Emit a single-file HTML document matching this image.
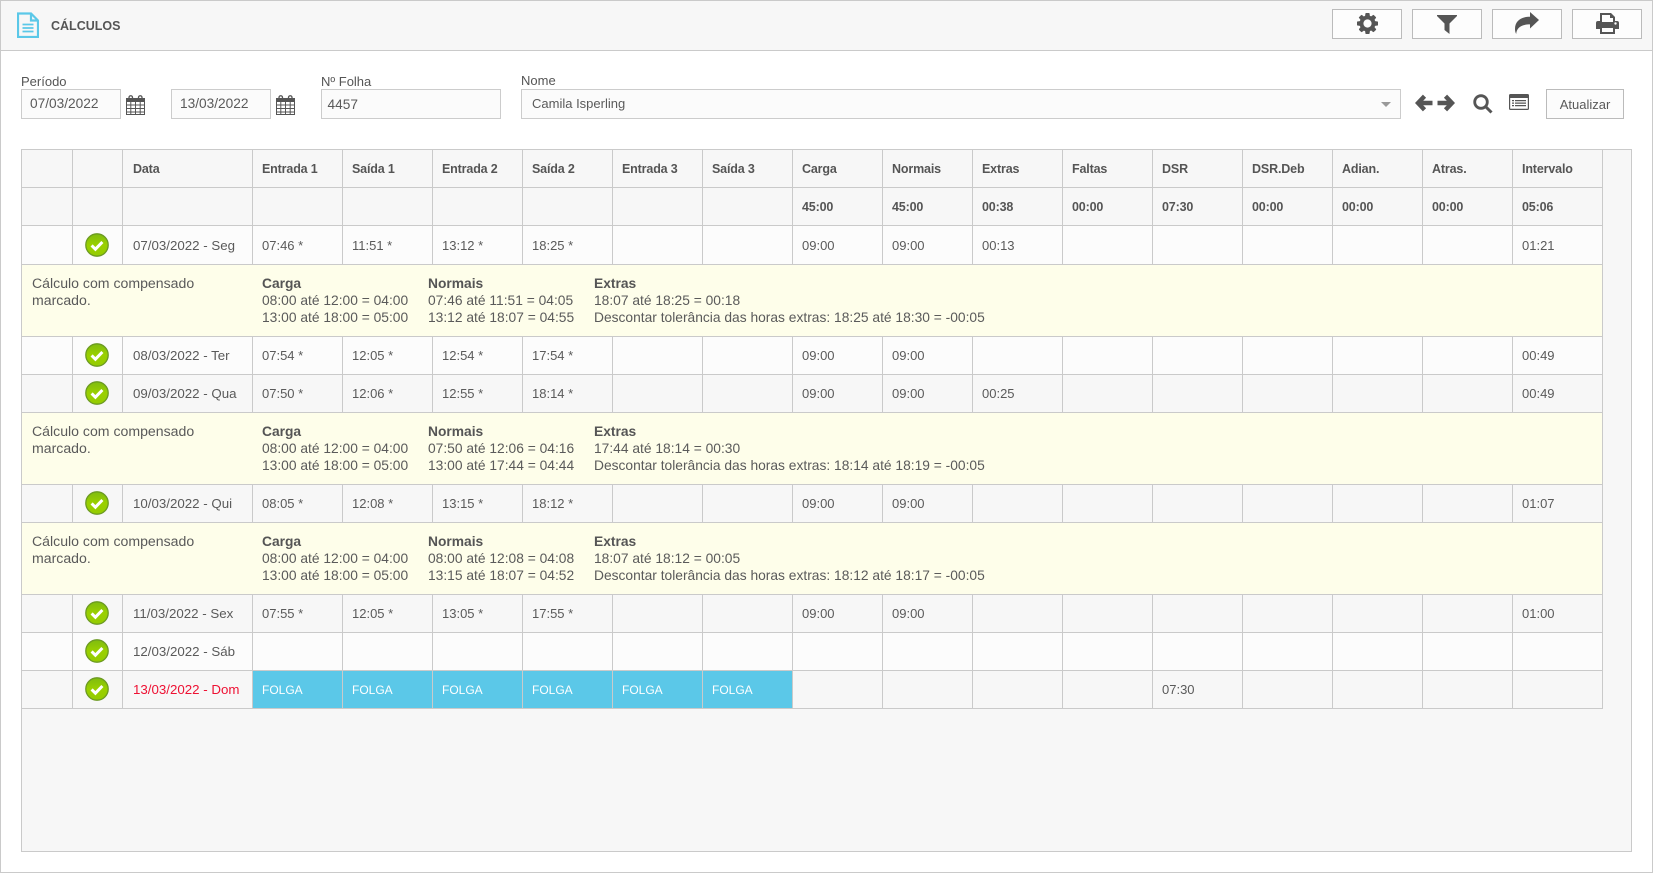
<!DOCTYPE html>
<html lang="pt-BR"><head><meta charset="utf-8"><title>Cálculos</title>
<style>
html,body{margin:0;padding:0;background:#fff}
body{width:1653px;height:873px;position:relative;overflow:hidden;font:13px "Liberation Sans",sans-serif;color:#555}
.abs,.frame,.head,.btn,.inp,.lbl,.box,svg.i{position:absolute;box-sizing:border-box}
.frame{left:0;top:0;width:1653px;height:873px;border:1px solid #cacaca}
.head{left:1px;top:1px;width:1651px;height:50px;background:#f7f7f7;border-bottom:1px solid #cacaca}
.title{position:absolute;left:50px;top:17px;font:bold 12.5px/16px "Liberation Sans",sans-serif;color:#555}
.btn{top:9px;width:70px;height:30px;background:#fdfdfd;border:1px solid #bbb}
.inp{top:89px;height:30px;background:#fbfbfb;border:1px solid #ccc;line-height:28px;color:#5a5a5a}
.lbl{top:74px;line-height:16px;font-size:13px;color:#555}
.box{left:21px;top:149px;width:1611px;height:703px;background:#f7f7f7;border:1px solid #cacaca}
table{border-collapse:separate;border-spacing:0;table-layout:fixed;width:1581px;font-size:13px;color:#5a5a5a}
td{border-right:1px solid #cacaca;border-bottom:1px solid #cacaca;padding:0 0 0 9px;white-space:nowrap;vertical-align:middle;overflow:hidden}
td.n{padding:0}
td:nth-child(3){padding-left:10px}
tr.h td{height:37px;font-weight:bold;font-size:12.5px;letter-spacing:-.15px;background:#f7f7f7;color:#555}
tr.a td{height:37px;background:#fcfcfc}
tr.b td{height:37px;background:#f7f7f7}
tr.f td{height:38px;background:#fcfcfc}
tr.y td{height:71px;background:#fefeea;padding:0;position:relative}
tr:not(.h) td:nth-child(3){font-size:13.3px}
.c{position:relative;height:37px}
.c svg{position:absolute;left:12px;top:6px}
.y div{position:absolute;top:10px;font-size:13.8px;line-height:17px;white-space:nowrap}
.y div:first-child{font-size:14.1px}
.y b{font-weight:bold;color:#555}
td.fo{background:#5bc8e8!important;color:#fff;font-size:12px}
tr:not(.h) td.red{color:#ee1133}
</style></head><body>
<svg width="0" height="0" style="position:absolute"><defs>
<linearGradient id="g" x1="0" y1="0" x2="0" y2="1"><stop offset="0" stop-color="#7fbc10"/><stop offset=".5" stop-color="#9ad000"/><stop offset="1" stop-color="#94cc00"/></linearGradient>
<symbol id="ok" viewBox="0 0 24 24"><circle cx="12" cy="12" r="11.2" fill="url(#g)" stroke="#6c9a22" stroke-width="1.3"/><path d="M6.6 12.4l3.8 3.8 7-7.2" fill="none" stroke="#fff" stroke-width="3"/></symbol>
<symbol id="cal" viewBox="0 0 19 20"><path d="M3 5V2.5A1.5 1.5 0 0 1 6.5 2.5V5M12.5 5V2.5A1.5 1.5 0 0 1 16 2.5V5" fill="none" stroke="#555" stroke-width="1.3"/><path d="M0 3H19V20H0Z" fill="#555"/><path d="M1 7h3.300v2.500H1zM5.300 7h3.700v2.500H5.300zM10 7h3.700v2.500H10zM14.700 7H18v2.500h-3.300zM1 10.500h3.300V13H1zM5.300 10.500h3.700V13H5.300zM10 10.500h3.700V13H10zM14.700 10.500H18V13h-3.300zM1 14h3.300v2.500H1zM5.300 14h3.700v2.500H5.300zM10 14h3.700v2.500H10zM14.700 14H18v2.500h-3.300z" fill="#fff"/><path d="M1 17.500h3.300V19H1zM5.300 17.500h3.700V19H5.300zM10 17.500h3.700V19H10zM14.700 17.500H18V19h-3.300z" fill="#fff"/></symbol>
</defs></svg>
<div class="frame"></div>
<div class="head"><span class="title">CÁLCULOS</span></div>
<svg class="i" style="left:17px;top:12px" width="22" height="26" viewBox="0 0 22 26" fill="none" stroke="#5bc8e8" stroke-width="2.2"><path d="M1 1.500H14L21 8.500V25H1Z"/><path d="M14 1.500V8.500H21"/><path d="M5.500 12.500H16.500M5.500 16H16.500M5.500 19.500H16.500" stroke-width="1.700"/></svg>

<div class="btn" style="left:1332px"></div><div class="btn" style="left:1412px"></div><div class="btn" style="left:1492px"></div><div class="btn" style="left:1572px"></div>
<svg class="i" style="left:1357px;top:13px" width="21" height="21" viewBox="0 0 1536 1536"><path fill="#555" fill-rule="evenodd" d="M1024 768q0-106-75-181t-181-75-181 75-75 181 75 181 181 75 181-75 75-181zm512-109v222q0 12-8 23t-20 13l-185 28q-19 54-39 91 35 50 107 138 10 12 10 25t-9 23q-27 37-99 108t-94 71q-12 0-26-9l-138-108q-44 23-91 38-16 136-29 186-7 28-36 28h-222q-14 0-24.500-8.500t-11.500-21.500l-28-184q-49-16-90-37l-141 107q-10 9-25 9-14 0-25-11-126-114-165-168-7-10-7-23 0-12 8-23 15-21 51-66.500t54-70.500q-27-50-41-99l-183-27q-13-2-21-12.500t-8-23.500v-222q0-12 8-23t19-13l186-28q14-46 39-92-40-57-107-138-10-12-10-24 0-10 9-23 26-36 98.500-107.500t94.500-71.500q13 0 26 10l138 107q44-23 91-38 16-136 29-186 7-28 36-28h222q14 0 24.500 8.500t11.500 21.500l28 184q49 16 90 37l142-107q9-9 24-9 13 0 25 10 129 119 165 170 7 8 7 22 0 12-8 23-15 21-51 66.500t-54 70.500q26 50 41 98l183 28q13 2 21 12.500t8 23.500z"/><circle cx="768" cy="768" r="300" fill="#fdfdfd"/></svg>
<svg class="i" style="left:1437px;top:15px" width="20" height="19" viewBox="0 0 20 19"><path fill="#555" d="M0 0H20V1L12.500 8.500V19L7.500 15V8.500L0 1Z"/></svg>
<svg class="i" style="left:1515px;top:12px" width="24" height="22" viewBox="0 0 24 22"><path fill="#555" d="M24 8L15 0V4.800C6 4.800 0 9 0 17C0 19 .4 20.500 1.200 22C1.500 16 6 12.400 15 12.400V16.500Z"/></svg>
<svg class="i" style="left:1596px;top:13px" width="23" height="21" viewBox="0 0 23 21"><path fill="#555" fill-rule="evenodd" d="M4 0H15L19 4V8H21A2 2 0 0 1 23 10V16H19V21H4V16H0V10A2 2 0 0 1 2 8H4ZM6 2V9H17V5H14V2ZM6 15V19H17V15Z"/><circle cx="19.500" cy="10.500" r="1.200" fill="#fff"/></svg>

<div class="lbl" style="left:21px">Período</div>
<div class="lbl" style="left:321px">Nº Folha</div>
<div class="lbl" style="left:521px;top:73px">Nome</div>
<div class="inp" style="left:21px;width:100px;padding-left:8px;font-size:13.7px">07/03/2022</div>
<svg class="i" style="left:126px;top:95px" width="19" height="20"><use href="#cal"/></svg>
<div class="inp" style="left:171px;width:100px;padding-left:8px;font-size:13.7px">13/03/2022</div>
<svg class="i" style="left:276px;top:95px" width="19" height="20"><use href="#cal"/></svg>
<div class="inp" style="left:321px;width:180px;padding-left:4px;font-size:13.7px;line-height:30px;text-indent:1.5px">4457</div>
<div class="inp" style="left:521px;width:880px;padding-left:10px;line-height:27px">Camila Isperling</div>
<svg class="i" style="left:1381px;top:102px" width="10" height="5" viewBox="0 0 10 5"><path fill="#999" d="M0 0H10L5 5Z"/></svg>
<svg class="i" style="left:1415px;top:94px" width="40" height="18" viewBox="0 0 40 18" fill="none" stroke="#555" stroke-width="4.4"><path d="M9.500 2.200L3 9L9.500 15.800M3.500 9H17.500"/><path d="M30.500 2.200L37 9L30.500 15.800M36.500 9H22.500"/></svg>
<svg class="i" style="left:1473px;top:94px" width="20" height="20" viewBox="0 0 20 20" fill="none" stroke="#555"><circle cx="8" cy="8" r="6.300" stroke-width="2.800"/><path d="M12.500 12.500L18.500 18.500" stroke-width="3"/></svg>
<svg class="i" style="left:1509px;top:94px" width="20" height="16" viewBox="0 0 20 16"><path fill="#555" fill-rule="evenodd" d="M1.500 0H18.500A1.500 1.500 0 0 1 20 1.500V14.500A1.500 1.500 0 0 1 18.500 16H1.500A1.500 1.500 0 0 1 0 14.500V1.500A1.500 1.500 0 0 1 1.500 0ZM1.200 4V14.800H18.800V4Z"/><path fill="#555" d="M3 6h2v1.200H3zM6 6h11v1.200H6zM3 8.500h2v1.200H3zM6 8.500h11v1.200H6zM3 11h2v1.200H3zM6 11h11v1.200H6z"/></svg>
<div class="inp" style="left:1546px;width:78px;text-align:center;border-color:#bbb;background:#fcfcfc;line-height:29px">Atualizar</div>

<div class="box">
<table>
<colgroup><col style="width:51px"><col style="width:50px"><col style="width:130px"><col span="15" style="width:90px"></colgroup>
<tr class="h"><td class="n"></td><td class="n"></td><td>Data</td><td>Entrada 1</td><td>Saída 1</td><td>Entrada 2</td><td>Saída 2</td><td>Entrada 3</td><td>Saída 3</td><td>Carga</td><td>Normais</td><td>Extras</td><td>Faltas</td><td>DSR</td><td>DSR.Deb</td><td>Adian.</td><td>Atras.</td><td>Intervalo</td></tr>
<tr class="h"><td class="n"></td><td class="n"></td><td></td><td></td><td></td><td></td><td></td><td></td><td></td><td>45:00</td><td>45:00</td><td>00:38</td><td>00:00</td><td>07:30</td><td>00:00</td><td>00:00</td><td>00:00</td><td>05:06</td></tr>
<tr class="f"><td class="n"></td><td class="n"><div class="c" style="height:38px"><svg width="24" height="24" style="top:7px"><use href="#ok"/></svg></div></td><td>07/03/2022 - Seg</td><td>07:46 *</td><td>11:51 *</td><td>13:12 *</td><td>18:25 *</td><td></td><td></td><td>09:00</td><td>09:00</td><td>00:13</td><td></td><td></td><td></td><td></td><td></td><td>01:21</td></tr>
<tr class="y"><td colspan="18" class="y"><div style="left:10px">Cálculo com compensado<br>marcado.</div><div style="left:240px"><b>Carga</b><br>08:00 até 12:00 = 04:00<br>13:00 até 18:00 = 05:00</div><div style="left:406px"><b>Normais</b><br>07:46 até 11:51 = 04:05<br>13:12 até 18:07 = 04:55</div><div style="left:572px"><b>Extras</b><br>18:07 até 18:25 = 00:18<br>Descontar tolerância das horas extras: 18:25 até 18:30 = -00:05</div></td></tr>
<tr class="a"><td class="n"></td><td class="n"><div class="c"><svg width="24" height="24"><use href="#ok"/></svg></div></td><td>08/03/2022 - Ter</td><td>07:54 *</td><td>12:05 *</td><td>12:54 *</td><td>17:54 *</td><td></td><td></td><td>09:00</td><td>09:00</td><td></td><td></td><td></td><td></td><td></td><td></td><td>00:49</td></tr>
<tr class="b"><td class="n"></td><td class="n"><div class="c"><svg width="24" height="24"><use href="#ok"/></svg></div></td><td>09/03/2022 - Qua</td><td>07:50 *</td><td>12:06 *</td><td>12:55 *</td><td>18:14 *</td><td></td><td></td><td>09:00</td><td>09:00</td><td>00:25</td><td></td><td></td><td></td><td></td><td></td><td>00:49</td></tr>
<tr class="y"><td colspan="18" class="y"><div style="left:10px">Cálculo com compensado<br>marcado.</div><div style="left:240px"><b>Carga</b><br>08:00 até 12:00 = 04:00<br>13:00 até 18:00 = 05:00</div><div style="left:406px"><b>Normais</b><br>07:50 até 12:06 = 04:16<br>13:00 até 17:44 = 04:44</div><div style="left:572px"><b>Extras</b><br>17:44 até 18:14 = 00:30<br>Descontar tolerância das horas extras: 18:14 até 18:19 = -00:05</div></td></tr>
<tr class="b"><td class="n"></td><td class="n"><div class="c"><svg width="24" height="24"><use href="#ok"/></svg></div></td><td>10/03/2022 - Qui</td><td>08:05 *</td><td>12:08 *</td><td>13:15 *</td><td>18:12 *</td><td></td><td></td><td>09:00</td><td>09:00</td><td></td><td></td><td></td><td></td><td></td><td></td><td>01:07</td></tr>
<tr class="y"><td colspan="18" class="y"><div style="left:10px">Cálculo com compensado<br>marcado.</div><div style="left:240px"><b>Carga</b><br>08:00 até 12:00 = 04:00<br>13:00 até 18:00 = 05:00</div><div style="left:406px"><b>Normais</b><br>08:00 até 12:08 = 04:08<br>13:15 até 18:07 = 04:52</div><div style="left:572px"><b>Extras</b><br>18:07 até 18:12 = 00:05<br>Descontar tolerância das horas extras: 18:12 até 18:17 = -00:05</div></td></tr>
<tr class="b"><td class="n"></td><td class="n"><div class="c"><svg width="24" height="24"><use href="#ok"/></svg></div></td><td>11/03/2022 - Sex</td><td>07:55 *</td><td>12:05 *</td><td>13:05 *</td><td>17:55 *</td><td></td><td></td><td>09:00</td><td>09:00</td><td></td><td></td><td></td><td></td><td></td><td></td><td>01:00</td></tr>
<tr class="a"><td class="n"></td><td class="n"><div class="c"><svg width="24" height="24"><use href="#ok"/></svg></div></td><td>12/03/2022 - Sáb</td><td></td><td></td><td></td><td></td><td></td><td></td><td></td><td></td><td></td><td></td><td></td><td></td><td></td><td></td><td></td></tr>
<tr class="b"><td class="n"></td><td class="n"><div class="c"><svg width="24" height="24"><use href="#ok"/></svg></div></td><td class="red">13/03/2022 - Dom</td><td class="fo">FOLGA</td><td class="fo">FOLGA</td><td class="fo">FOLGA</td><td class="fo">FOLGA</td><td class="fo">FOLGA</td><td class="fo">FOLGA</td><td></td><td></td><td></td><td></td><td>07:30</td><td></td><td></td><td></td><td></td></tr>
</table>
</div>
</body></html>
